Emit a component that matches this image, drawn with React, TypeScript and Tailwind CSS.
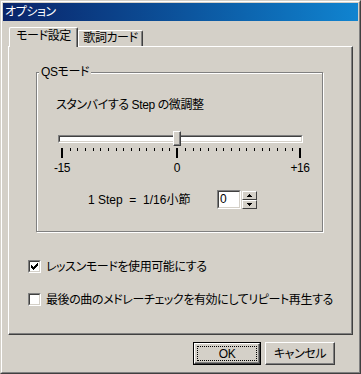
import React from 'react';

// classic 3D edges
const Sunken: React.FC<{ className?: string; children?: React.ReactNode }> = ({ className = '', children }) => (
  <div className={`border border-t-[#808080] border-l-[#808080] border-b-white border-r-white ${className}`}>
    <div className="w-full h-full border border-t-[#404040] border-l-[#404040] border-b-[#d4d0c8] border-r-[#d4d0c8] bg-white">
      {children}
    </div>
  </div>
);

const CheckMark = () => (
  <svg width="7" height="7" viewBox="0 0 7 7" shapeRendering="crispEdges" className="block">
    <rect x="6" y="0" width="1" height="1" fill="#000" />
    <rect x="5" y="1" width="2" height="1" fill="#000" />
    <rect x="0" y="2" width="1" height="1" fill="#000" />
    <rect x="4" y="2" width="3" height="1" fill="#000" />
    <rect x="0" y="3" width="2" height="1" fill="#000" />
    <rect x="3" y="3" width="3" height="1" fill="#000" />
    <rect x="0" y="4" width="5" height="1" fill="#000" />
    <rect x="1" y="5" width="3" height="1" fill="#000" />
    <rect x="2" y="6" width="1" height="1" fill="#000" />
  </svg>
);

const CheckBox: React.FC<{ checked?: boolean; label: string }> = ({ checked, label }) => (
  <div className="flex items-center h-[13px] gap-[5px]">
    <Sunken className="w-[13px] h-[13px]">
      <div className="pl-[1px] pt-[1px]">{checked && <CheckMark />}</div>
    </Sunken>
    <span className="leading-[14px] whitespace-nowrap">{label}</span>
  </div>
);

const Ticks = () => {
  const ticks = [];
  for (let i = 0; i <= 31; i++) {
    const x = Math.round(4 + (i * 238) / 31);
    const big = i === 0 || i === 15 || i === 31;
    ticks.push(
      big ? (
        <rect key={i} x={x - 1} y={0} width={2} height={10} fill="#000" />
      ) : (
        <rect key={i} x={x} y={0} width={1} height={3} fill="#000" />
      )
    );
  }
  return (
    <svg width="245" height="10" viewBox="0 0 245 10" shapeRendering="crispEdges" className="block">
      {ticks}
    </svg>
  );
};

const SpinHalf: React.FC<{ up?: boolean }> = ({ up }) => (
  <div className="h-[9px] w-[15px] border border-t-white border-l-white border-b-[#404040] border-r-[#404040] bg-[#d4d0c8] flex items-center justify-center">
    <svg width="5" height="3" viewBox="0 0 5 3" shapeRendering="crispEdges" className="block">
      {up ? (
        <>
          <rect x="2" y="0" width="1" height="1" fill="#000" />
          <rect x="1" y="1" width="3" height="1" fill="#000" />
          <rect x="0" y="2" width="5" height="1" fill="#000" />
        </>
      ) : (
        <>
          <rect x="0" y="0" width="5" height="1" fill="#000" />
          <rect x="1" y="1" width="3" height="1" fill="#000" />
          <rect x="2" y="2" width="1" height="1" fill="#000" />
        </>
      )}
    </svg>
  </div>
);

export default function App() {
  return (
    <div className="w-[361px] h-[374px] bg-[#d4d0c8] text-black text-[12px] tracking-[-0.4px] font-['Liberation_Sans','Noto_Sans_CJK_JP',sans-serif] [font-feature-settings:'palt'] border border-t-[#d4d0c8] border-l-[#d4d0c8] border-b-[#404040] border-r-[#404040]">
      <div className="w-full h-full border border-t-white border-l-white border-b-[#808080] border-r-[#808080] p-[1px]">
        {/* Title bar */}
        <div className="h-[18px] bg-linear-to-r from-[#0a246a] to-[#1084d0] flex items-center pl-[2px]">
          <span className="text-white leading-[14px]">オプション</span>
        </div>

        {/* Body */}
        <div className="pl-[5px] pt-[6px]">
          {/* Tabs */}
          <div className="flex items-end h-[19px]">
            <div className="relative z-10 ml-[1px] -mb-[1px] w-[69px] h-[20px] bg-[#d4d0c8] border-l border-t border-r border-l-white border-t-white border-r-[#404040] rounded-tl-[2px] rounded-tr-[2px] shadow-[inset_-1px_0_0_#808080] text-center pt-[1px] leading-[14px]">
              モード設定
            </div>
            <div className="w-[65px] h-[16px] bg-[#d4d0c8] border-l border-t border-r border-l-white border-t-white border-r-[#404040] rounded-tr-[2px] shadow-[inset_-1px_0_0_#808080] text-center leading-[14px]">
              歌詞カード
            </div>
          </div>

          {/* Panel */}
          <div className="w-[345px] h-[289px] border border-t-white border-l-white border-b-[#404040] border-r-[#404040] shadow-[inset_-1px_-1px_0_#808080]">
            {/* Group box */}
            <div className="relative ml-[27px] mt-[25px] w-[287px] h-[160px] border border-[#808080] shadow-[inset_1px_1px_0_#fff,1px_1px_0_#fff]">
              <span className="absolute left-[2px] -top-[8px] px-[2px] bg-[#d4d0c8] leading-[14px]">QSモード</span>

              <div className="pt-[25px] pl-[19px] leading-[14px]">スタンバイする Step の微調整</div>

              {/* Slider */}
              <div className="ml-[21px] mt-[23px] w-[245px]">
                <div className="relative h-[8px] border border-t-[#808080] border-l-[#808080] border-b-white border-r-white">
                  <div className="h-full border border-t-[#404040] border-l-[#404040] border-b-[#d4d0c8] border-r-[#d4d0c8] bg-white" />
                  <div className="absolute left-[114px] -top-[5px] w-[8px] h-[15px] border border-t-white border-l-white border-b-[#404040] border-r-[#404040] bg-[#d4d0c8] shadow-[inset_-1px_-1px_0_#808080]" />
                </div>
                <div className="mt-[5px]">
                  <Ticks />
                </div>
              </div>
              <div className="flex mt-[3px] ml-[5px] leading-[14px]">
                <span className="w-[40px] text-center">-15</span>
                <span className="w-[40px] ml-[75px] text-center">0</span>
                <span className="w-[40px] ml-[83px] text-center">+16</span>
              </div>

              {/* Step row */}
              <div className="flex items-center h-[19px] mt-[15px] pl-[51px]">
                <span className="w-[129px] whitespace-pre leading-[14px] tracking-normal">1 Step  =  1/16小節</span>
                <Sunken className="w-[24px] h-[19px]">
                  <div className="pl-[1px] leading-[14px]">0</div>
                </Sunken>
                <div className="ml-[1px] flex flex-col">
                  <SpinHalf up />
                  <SpinHalf />
                </div>
              </div>
            </div>

            <div className="ml-[19px] mt-[28px]">
              <CheckBox checked label="レッスンモードを使用可能にする" />
            </div>
            <div className="ml-[19px] mt-[20px]">
              <CheckBox label="最後の曲のメドレーチェックを有効にしてリピート再生する" />
            </div>
          </div>

          {/* Buttons */}
          <div className="flex mt-[7px] ml-[185px]">
            <div className="w-[68px] h-[23px] border border-black">
              <div className="w-full h-full border border-t-white border-l-white border-b-[#404040] border-r-[#404040] shadow-[inset_-1px_-1px_0_#808080] p-[2px]">
                <div className="w-full h-full border border-dotted border-black flex items-center justify-center leading-[14px]">
                  OK
                </div>
              </div>
            </div>
            <div className="ml-[4px] w-[70px] h-[23px] border border-t-white border-l-white border-b-[#404040] border-r-[#404040] shadow-[inset_-1px_-1px_0_#808080] flex items-center justify-center leading-[14px]">
              キャンセル
            </div>
          </div>
        </div>
      </div>
    </div>
  );
}
